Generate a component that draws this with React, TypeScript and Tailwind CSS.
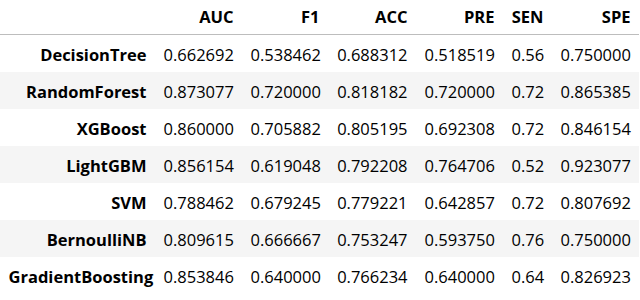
const cols = ["AUC", "F1", "ACC", "PRE", "SEN", "SPE"];

const rows: [string, string[]][] = [
  ["DecisionTree", ["0.662692", "0.538462", "0.688312", "0.518519", "0.56", "0.750000"]],
  ["RandomForest", ["0.873077", "0.720000", "0.818182", "0.720000", "0.72", "0.865385"]],
  ["XGBoost", ["0.860000", "0.705882", "0.805195", "0.692308", "0.72", "0.846154"]],
  ["LightGBM", ["0.856154", "0.619048", "0.792208", "0.764706", "0.52", "0.923077"]],
  ["SVM", ["0.788462", "0.679245", "0.779221", "0.642857", "0.72", "0.807692"]],
  ["BernoulliNB", ["0.809615", "0.666667", "0.753247", "0.593750", "0.76", "0.750000"]],
  ["GradientBoosting", ["0.853846", "0.640000", "0.766234", "0.640000", "0.64", "0.826923"]],
];

const widths = ["w-[155px]", "w-[87px]", "w-[86px]", "w-[88px]", "w-[87px]", "w-[49px]", "w-[87px]"];

export default function App() {
  return (
    <div className="w-[640px] h-[300px] bg-white overflow-hidden font-['Open_Sans',sans-serif] text-black">
      <table className="table-fixed w-[639px] border-collapse text-[16.5px]">
        <colgroup>
          {widths.map((w, i) => (
            <col key={i} className={w} />
          ))}
        </colgroup>
        <thead>
          <tr className="border-b border-[#bdbdbd]">
            <th />
            {cols.map((c) => (
              <th key={c} className="text-right font-bold px-[8.5px] leading-[20px] pt-[7px] pb-[7px] whitespace-nowrap">
                {c}
              </th>
            ))}
          </tr>
        </thead>
        <tbody>
          {rows.map(([name, vals], i) => (
            <tr key={name} className={i % 2 === 1 ? "bg-[#f5f5f5]" : "bg-white"}>
              <th className="text-right font-bold px-[8.5px] pt-[10px] pb-[7px] leading-[20px] whitespace-nowrap">{name}</th>
              {vals.map((v, j) => (
                <td key={j} className="text-right px-[8.5px] pt-[10px] pb-[7px] leading-[20px] whitespace-nowrap">
                  {v}
                </td>
              ))}
            </tr>
          ))}
        </tbody>
      </table>
    </div>
  );
}
